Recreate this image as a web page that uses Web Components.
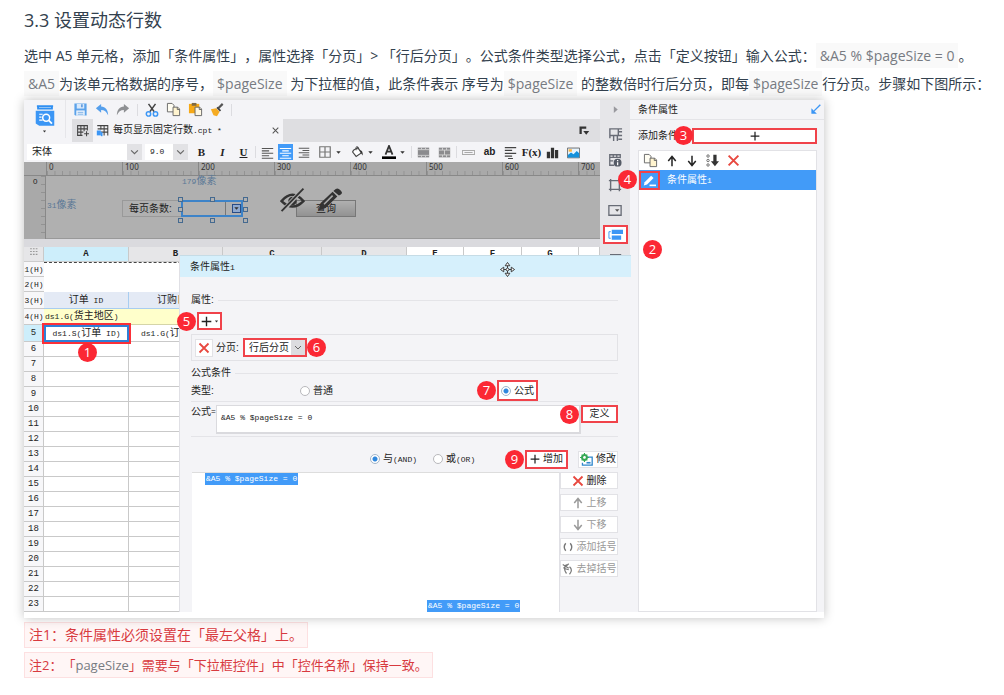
<!DOCTYPE html>
<html lang="zh-CN">
<head>
<meta charset="utf-8">
<title>设置动态行数</title>
<style>
html, body { margin: 0; background: #fff; }
body { font-family: "Open Sans", "Noto Sans CJK SC", sans-serif; color: #33414e; }
</style>
</head>
<body>
<doc-article>
  <h2 slot="title">3.3 设置动态行数</h2>
  <report-designer slot="figure"></report-designer>
  <doc-note>注1：条件属性必须设置在「最左父格」上。</doc-note>
  <doc-note small>注2：「<doc-code plain>pageSize</doc-code>」需要与「下拉框控件」中「控件名称」保持一致。</doc-note>
</doc-article>
<script>
const base = `
*, *::before, *::after { box-sizing: border-box; }
button, input, select, textarea { font: inherit; color: inherit; margin: 0; padding: 0; border: 0; border-radius: 0; background: none; outline: 0; }
button { display: inline-flex; align-items: center; justify-content: center; white-space: nowrap; }
select { appearance: none; }
.m { font-family: "Liberation Mono", "Noto Sans CJK SC", monospace; font-size: 8px; }
.sep { width: 1px; height: 12px; background: #dcdce0; }
`;

function define(name, css, html) {
  const template = document.createElement('template');
  template.innerHTML = `<style>${base}${css}</style>${html}`;
  customElements.define(name, class extends HTMLElement {
    constructor() {
      super();
      this.attachShadow({ mode: 'open' }).append(template.content.cloneNode(true));
    }
  });
}

const icons = {
  logo: '<path d="M1 1h14M2 1v2h12V1" fill="none" stroke="#2f8ff2" stroke-width="1.6"/><path d="M0 5h16v13H3L0 16z" fill="#3b96f5"/><path d="M3 8h3M3 10.500h2M3 13h3" stroke="#fff"/><circle cx="9" cy="11" r="3" fill="#3b96f5" stroke="#fff" stroke-width="1.300"/><path d="M11 13l3 3" stroke="#fff" stroke-width="1.500"/>',
  save: '<path d="M1.500 1.500h13v13h-12l-1-1z" fill="#5ba2ea"/><rect x="4" y="2" width="8" height="5" fill="#d9e9fb"/><path d="M9.500 2.500v3" stroke="#4a8cd8" stroke-width="1.500"/><rect x="3.500" y="9" width="9" height="5.500" fill="#eef5fd"/><path d="M5 11h6M5 13h6" stroke="#79aee5"/>',
  undo: '<path d="M7 1L1 6l6 5V8c4 0 6 2 8 6 0-6-3-9.500-8-10z" fill="#559fec"/>',
  redo: '<path d="M9 1l6 5-6 5V8c-4 0-6 2-8 6 0-6 3-9.500 8-10z" fill="#8e9093"/>',
  cut: '<path d="M4 1l6.500 9M12 1L5.500 10" stroke="#444" stroke-width="1.700"/><circle cx="4" cy="12.500" r="2.500" fill="none" stroke="#3b96f5" stroke-width="1.700"/><circle cx="12" cy="12.500" r="2.500" fill="none" stroke="#3b96f5" stroke-width="1.700"/>',
  copy: '<path d="M1.500 1.500h5l2 2v7h-7z" fill="#fffdf2" stroke="#666"/><path d="M7.500 5.500h5l2 2v7h-7z" fill="#fff4cf" stroke="#666"/><path d="M12 5.500v2.500h2.500" fill="none" stroke="#666"/>',
  paste: '<path d="M1 2h11v10H1z" fill="#f6a916"/><path d="M4 1h5v3H4z" fill="#7f6a42"/><path d="M7.500 5.500h5l2 2v7h-7z" fill="#fff8e2" stroke="#666"/><path d="M12 5.500v2.500h2.500" fill="none" stroke="#666"/>',
  brush: '<path d="M14.500 1l-5 5" stroke="#555" stroke-width="2.500"/><path d="M1 7l6-1 4 4-3 5-4-1z" fill="#f5ab22"/><path d="M8 5l4 4" stroke="#444" stroke-width="2"/>',
  addgrid: '<path d="M14 8V2H2v12h6M2 6h12M2 10h7M6 2v12M10 2v7M10 12h6M13 9v6" fill="none" stroke="#444" stroke-width="1.300"/>',
  sheet: '<path d="M1.500 2h13v12M2 6h12M6 10h8M6 2v5M10 2v12" fill="none" stroke="#444" stroke-width="1.300"/><path d="M1 8h5v6H1z" fill="#3b96f5"/><path d="M7 10v5" stroke="#3b96f5" stroke-width="2"/>',
  close: '<path d="M3 3l10 10M13 3L3 13" stroke="#555" stroke-width="1.800"/>',
  corner: '<path d="M2 2h9v3H5v7H2z" fill="#333"/><path d="M7 8h8l-4 5z" fill="#333"/>',
  down: '<path d="M3 5l5 6 5-6z" fill="#333"/>',
  chevron: '<path d="M2 5l6 6 6-6" fill="none" stroke="#666" stroke-width="2"/>',
  left: '<path d="M1 3h14M1 6h9M1 9h14M1 12h9M1 15h14" stroke="#555" stroke-width="1.300"/>',
  center: '<path d="M1 3h14M4 6h8M1 9h14M4 12h8M1 15h14" stroke="#fff" stroke-width="1.300"/>',
  right: '<path d="M1 3h14M6 6h9M1 9h14M6 12h9M1 15h14" stroke="#555" stroke-width="1.300"/>',
  borders: '<path d="M2 2h12v12H2zM8 2v12M2 8h12" fill="none" stroke="#777" stroke-width="1.400"/>',
  fill: '<path d="M4 6l5-3 4 6-6 4-4-5z" fill="#fff" stroke="#444" stroke-width="1.300"/><path d="M7 6V2.500q1-2 2 0V5" fill="none" stroke="#444"/><path d="M11 6q4 0 3.500 6l-2-3z" fill="#333"/>',
  color: '<path d="M4 11L8 1l4 10M5.500 7.500h5" fill="none" stroke="#333" stroke-width="2"/><path d="M0 13h16v3H0z" fill="#000"/>',
  merge: '<path d="M1 2h14v12H1z" fill="#8b8b8e"/><path d="M1 4.500h14M1 11.500h14M5.500 2v2M10.500 2v2M5.500 12v2M10.500 12v2" stroke="#ddd"/>',
  unmerge: '<path d="M1 2h14v12H1z" fill="#8b8b8e"/><path d="M1 5h14M1 11h14M5.500 2v3M10.500 2v3M5.500 11v3M10.500 11v3M8 5v6" stroke="#ddd"/>',
  strip: '<path d="M.500 5.500h15v5H.500zM3 8h10" fill="none" stroke="#aaa" stroke-width="1.300"/>',
  lines: '<path d="M1 2h14M1 5.500h9M1 9h14M1 12.500h9M5 15.500h6" stroke="#444" stroke-width="1.500"/>',
  bars: '<path d="M1 7h4v8H1zM6 2h4v13H6zM11 5h4v10h-4z" fill="#333"/>',
  image: '<path d="M.500 2.500h15v12H.500z" fill="#e6f4ff" stroke="#555"/><path d="M1 14v-3l4-3 3 2 4-4 3 3v5z" fill="#1591db"/><path d="M2 4h4v3H2z" fill="#ffb33b"/>',
  play: '<path d="M5 2l7 6-7 6z" fill="#99999e"/>',
  cellprop: '<path d="M2 12V2h13M2 9h9V2M6 9v6M10 9v6M11 5h4M11 9h4M11 13h4" fill="none" stroke="#686c76" stroke-width="1.500"/>',
  cellinfo: '<path d="M14 6V2H2v12h5M2 5h12M6 2v3M10 2v3M2 9h4" fill="none" stroke="#686c76" stroke-width="1.500"/><circle cx="11" cy="11" r="4.500" fill="#555b66"/><path d="M11 8v1.500M11 10.500V14" stroke="#fff" stroke-width="1.500"/>',
  frame: '<path d="M3 1v14M13 1v14M1 3h14M1 13h14" stroke="#686c76" stroke-width="1.600"/>',
  combo: '<path d="M1 3h14v11H1z" fill="none" stroke="#686c76" stroke-width="1.500"/><path d="M8 7h5l-2.500 3z" fill="#555"/>',
  cond: '<path d="M4 3h12v4.500H4zM4 9h10v4.500H4z" fill="#3b96f5"/><path d="M3 5H1v7h2" fill="none" stroke="#3b96f5"/>',
  pin: '<path d="M15 1L6 10" stroke="#3b96f5" stroke-width="2"/><path d="M2 6l8 8H2z" fill="#3b96f5"/>',
  plus: '<path d="M8 1v14M1 8h14" stroke="#222" stroke-width="2"/>',
  up: '<path d="M8 15V3M3 8l5-6 5 6" fill="none" stroke="currentColor" stroke-width="2"/>',
  dn: '<path d="M8 1v12M3 8l5 6 5-6" fill="none" stroke="currentColor" stroke-width="2"/>',
  sort: '<path d="M9 1h4v8h3l-5 6-5-6h3z" fill="#333"/><circle cx="2.500" cy="2.500" r="1.500" fill="none" stroke="#555"/><circle cx="2.500" cy="8" r="1.500" fill="none" stroke="#555"/><circle cx="2.500" cy="13.500" r="1.500" fill="none" stroke="#555"/>',
  x: '<path d="M2 2l12 12M14 2L2 14" stroke="#e8483f" stroke-width="2.400"/>',
  edit: '<path d="M1 14l1-4 8-8 3 3-8 8z" fill="#fff"/><path d="M8 14h8" stroke="#fff" stroke-width="2"/>',
  eye: '<path d="M1 9q7-8 14 0-7 7-14 0z" fill="none" stroke="#333" stroke-width="1.600"/><circle cx="8" cy="9" r="2.700" fill="#333"/><path d="M15 1L1 16" stroke="#b0b0b0" stroke-width="2.600"/><path d="M15 1L1 15.500" stroke="#333" stroke-width="1.200"/>',
  pencil: '<path d="M1 15l1.500-5L10 3l3 3-7.500 7.500zM11 2q2-2 4 0t0 3l-1 .500L10.500 2.500z" fill="#333"/><path d="M4.500 11L10 5.500" stroke="#aaa"/>',
  gear: '<path d="M8 5h7v10H3v-3" fill="none" stroke="#2e86cc" stroke-width="1.600"/><path d="M8 12h5" stroke="#2e86cc" stroke-width="2"/><circle cx="5.500" cy="5.500" r="3" fill="#fff" stroke="#35a854" stroke-width="2.600"/><path d="M5.500 0v2M5.500 9v2M0 5.500h2M9 5.500h2M2 2l1.500 1.500M9 2L7.500 3.500M2 9l1.500-1.500M9 9L7.500 7.500" stroke="#35a854" stroke-width="1.400"/>',
  paren: '<path d="M5 3q-4 5 0 10M11 3q4 5 0 10" fill="none" stroke="#777" stroke-width="1.800"/>',
  unparen: '<path d="M6 2q-5 6 0 12M10 5q5 4 0 10M1 2l8 5M9 1L2 7M2 7l7 2" fill="none" stroke="#777" stroke-width="1.600"/>',
  dots: '<path d="M2 3h3M7 3h3M12 3h3M2 8h3M7 8h3M12 8h3M2 13h3M7 13h3M12 13h3" stroke="#999" stroke-width="2"/>',
  move: '<path d="M8 1v14M1 8h14" stroke="#333" stroke-width="1"/><path d="M8 .500L5.500 4h5zM8 15.500L5.500 12h5zM.500 8L4 5.500v5zM15.500 8L12 5.500v5z" fill="#fff" stroke="#333"/><circle cx="8" cy="8" r="1.500" fill="#fff" stroke="#333"/>'
};

customElements.define('ui-icon', class extends HTMLElement {
  constructor() {
    super();
    this.attachShadow({ mode: 'open' });
  }
  connectedCallback() {
    const name = this.getAttribute('name');
    const size = this.getAttribute('size') || 13;
    const box = name === 'logo' ? '0 0 16 19' : '0 0 16 16';
    this.shadowRoot.innerHTML = `<style>:host{display:inline-flex;flex:none;width:${size}px;height:${size}px}svg{width:100%;height:100%}</style><svg viewBox="${box}" aria-hidden="true">${icons[name]}</svg>`;
  }
});

define('step-badge', `
:host { position: absolute; z-index: 5; display: flex; align-items: center; justify-content: center; width: 19px; height: 19px; border-radius: 50%; background: #fb2834; color: #fff; font: 13px/19px "Open Sans", sans-serif; }
`, '<slot></slot>');

define('doc-code', `
:host { padding: 3px 4px; background: #f9f9f9; color: #777b82; font-size: 14px; }
:host([plain]) { padding: 0; background: none; font-size: inherit; }
`, '<slot></slot>');

define('doc-note', `
:host { display: block; width: fit-content; max-width: 100%; margin-bottom: 4px; padding: 0 4px; border: 1px solid #fde0e1; background: #fff6f6; color: #d83a3f; font-size: 14px; line-height: 24px; text-spacing-trim: space-all; }
:host([small]) { font-size: 13px; }
`, '<slot></slot>');

define('doc-article', `
:host { display: block; padding: 8px 8px 0 24px; text-spacing-trim: space-all; }
::slotted(h2) { margin: 0; font-size: 18px; line-height: 24px; font-weight: 400; }
p { margin: 10px 0 2px; font-size: 14px; line-height: 28px; }
`, `
<slot name="title"></slot>
<p>选中 A5 单元格，添加「条件属性」，属性选择「分页」&gt; 「行后分页」。公式条件类型选择公式，点击「定义按钮」输入公式：<doc-code>&amp;A5 % $pageSize = 0</doc-code>。<br><doc-code>&amp;A5</doc-code>为该单元格数据的序号，<doc-code>$pageSize</doc-code> 为下拉框的值，此条件表示 序号为<doc-code>$pageSize</doc-code> 的整数倍时行后分页，即每<doc-code>$pageSize</doc-code>行分页。步骤如下图所示：</p>
<slot name="figure"></slot>
<slot></slot>`);

define('report-designer', `
:host { position: relative; display: grid; grid-template-columns: 1fr 30px 194px; max-width: 800px; margin-bottom: 4px; padding-bottom: 6px; background: #fff; box-shadow: 0 0 10px rgba(0,0,0,.25); color: #222; font: 10px/14px "Liberation Sans", "Noto Sans CJK SC", sans-serif; }
main { display: flex; flex-direction: column; min-width: 0; }
condition-dialog { position: absolute; left: 155px; right: 193px; top: 155px; bottom: 6px; z-index: 2; }
`, `
<main>
  <designer-toolbar></designer-toolbar>
  <param-canvas></param-canvas>
  <sheet-grid></sheet-grid>
</main>
<side-rail></side-rail>
<condition-panel></condition-panel>
<condition-dialog></condition-dialog>`);

define('designer-toolbar', `
:host { display: block; background: #f4f4f7; }
.head { display: grid; grid-template-columns: 42px 1fr; }
.brand { display: flex; flex-direction: column; align-items: center; gap: 2px; padding-top: 5px; border-right: 1px solid #e6e6ea; height: 38px; }
.quick { display: flex; align-items: center; gap: 7px; height: 19px; padding-left: 7px; }
.tabs { display: flex; align-items: center; height: 23px; margin-left: 6px; background: #dedee1; }
.tabs > button { width: 21px; }
.tab { display: flex; align-items: center; gap: 4px; width: 190px; height: 23px; padding: 0 3px; background: #f4f4f7; }
.tab button { margin-left: auto; }
.corner { margin: 0 10px 0 auto; }
.format { display: flex; align-items: center; height: 20px; padding-left: 3px; }
label { position: relative; display: flex; height: 16px; background: #fff; margin-right: 3px; }
label select { width: 100%; padding-left: 5px; }
label ui-icon { position: absolute; right: 0; top: 0; padding: 3px; width: 15px; height: 16px; background: #e2e2e5; pointer-events: none; }
.font { width: 115px; } .size { width: 43px; }
.format > button { width: 21px; height: 16px; font-family: "Liberation Serif", serif; font-size: 11px; font-weight: 700; }
.format > .wide { width: 32px; gap: 3px; }
.format > .on { width: 15px; background: #429bf8; }
.format .sans { font-family: "Liberation Sans", sans-serif; font-size: 10px; }
.format .sep { margin: 0 1px; }
`, `
<div class="head">
  <div class="brand"><ui-icon name="logo" size="22"></ui-icon><ui-icon name="down" size="5"></ui-icon></div>
  <div>
    <div class="quick">
      <button aria-label="保存"><ui-icon name="save" size="15"></ui-icon></button><button aria-label="撤销"><ui-icon name="undo" size="14"></ui-icon></button><button aria-label="重做"><ui-icon name="redo" size="14"></ui-icon></button><span class="sep"></span><button aria-label="剪切"><ui-icon name="cut" size="14"></ui-icon></button><button aria-label="复制"><ui-icon name="copy" size="15"></ui-icon></button><button aria-label="粘贴"><ui-icon name="paste" size="15"></ui-icon></button><button aria-label="格式刷"><ui-icon name="brush" size="14"></ui-icon></button><span class="sep"></span>
    </div>
    <div class="tabs">
      <button aria-label="新建"><ui-icon name="addgrid"></ui-icon></button>
      <div class="tab"><ui-icon name="sheet"></ui-icon><span>每页显示固定行数<span class="m">.cpt *</span></span><button aria-label="关闭"><ui-icon name="close" size="9"></ui-icon></button></div>
      <ui-icon class="corner" name="corner" size="12"></ui-icon>
    </div>
  </div>
</div>
<div class="format">
  <label class="font"><select aria-label="字体"><option>宋体</option></select><ui-icon name="chevron" size="15"></ui-icon></label>
  <label class="size"><select class="m" aria-label="字号"><option>9.0</option></select><ui-icon name="chevron" size="15"></ui-icon></label>
  <button>B</button><button><i>I</i></button><button><u>U</u></button><span class="sep"></span>
  <button aria-label="左对齐"><ui-icon name="left"></ui-icon></button><button class="on" aria-label="居中"><ui-icon name="center"></ui-icon></button><button aria-label="右对齐"><ui-icon name="right" size="12"></ui-icon></button>
  <button class="wide" aria-label="边框"><ui-icon name="borders" size="14"></ui-icon><ui-icon name="down" size="7"></ui-icon></button><button class="wide" aria-label="填充"><ui-icon name="fill" size="14"></ui-icon><ui-icon name="down" size="7"></ui-icon></button><button class="wide" aria-label="字色"><ui-icon name="color" size="14"></ui-icon><ui-icon name="down" size="7"></ui-icon></button><span class="sep"></span>
  <button aria-label="合并"><ui-icon name="merge"></ui-icon></button><button aria-label="拆分"><ui-icon name="unmerge"></ui-icon></button><span class="sep"></span>
  <button aria-label="单元格"><ui-icon name="strip"></ui-icon></button><button class="sans">ab</button><button aria-label="文本"><ui-icon name="lines"></ui-icon></button><button>F(x)</button><button aria-label="图表"><ui-icon name="bars"></ui-icon></button><button aria-label="图片"><ui-icon name="image"></ui-icon></button>
</div>`);

define('param-canvas', `
:host { display: block; border-bottom: 8px solid #dadade; }
.ruler { display: flex; height: 14px; padding-left: 22px; overflow: hidden; background: #a9a9a9; border-bottom: 1px solid #888; }
.ruler span { flex: none; width: 76px; padding-left: 2px; border-left: 1px solid #888; font: 8px/10px "Noto Sans", sans-serif; color: #333; background: linear-gradient(90deg, #929292 1px, transparent 1px) 0 100% / 10% 4px repeat-x; }
.row { display: grid; grid-template-columns: 22px 1fr; height: 63px; }
.vert { border-right: 1px solid #888; padding: 2px 8px 0 9px; background: linear-gradient(#929292 1px, transparent 1px) 100% 0 / 4px 8px repeat-y #a9a9a9; font-size: 8px; line-height: 8px; }
.free { position: relative; background: #b0b0b0; border-bottom: 1px solid #999; }
.free > * { position: absolute; }
.hint { color: #5b7896; }
.caption { left: 76px; top: 24px; width: 60px; height: 17px; border: 1px solid #999; padding-left: 6px; line-height: 15px; }
.field { left: 135px; top: 24px; width: 62px; height: 17px; border: 2px solid #3d83c8; }
.field select { width: 100%; height: 13px; display: block; }
.field ui-icon { position: absolute; right: 0; top: 2px; background: #8fa9cf; border: 1px solid #284c86; }
.field::after { content: ""; position: absolute; right: 15px; top: 0; bottom: 0; width: 1px; background: #777; }
.h { width: 5px; height: 5px; border: 1px solid #456a90; background: #b0b0b0; }
.go { left: 250px; top: 24px; width: 60px; height: 17px; border: 1px solid #777; background: linear-gradient(#b0b0b0, #929292); }
`, `
<div class="ruler"><span>0</span><span>100</span><span>200</span><span>300</span><span>400</span><span>500</span><span>600</span><span>700</span></div>
<div class="row">
  <div class="vert">0</div>
  <div class="free">
    <span class="hint" style="left:136px;top:-2px"><span class="m">179</span>像素</span>
    <span class="hint" style="left:1px;top:22px"><span class="m">31</span>像素</span>
    <label class="caption" for="rows">每页条数:</label>
    <div class="field"><select id="rows"></select><ui-icon name="down" size="9"></ui-icon></div>
    <i class="h" style="left:132px;top:21px"></i><i class="h" style="left:164px;top:21px"></i><i class="h" style="left:197px;top:21px"></i>
    <i class="h" style="left:132px;top:31px"></i><i class="h" style="left:197px;top:31px"></i>
    <i class="h" style="left:132px;top:42px"></i><i class="h" style="left:164px;top:42px"></i><i class="h" style="left:197px;top:42px"></i>
    <button class="go">查询</button>
    <ui-icon name="eye" size="25" style="left:234px;top:11px"></ui-icon>
    <ui-icon name="pencil" size="25" style="left:271px;top:11px"></ui-icon>
  </div>
</div>`);

const blankRows = Array.from({ length: 18 }, (_, i) => `<tr><th scope="row">${i + 6}</th><td></td><td></td><td></td><td></td><td></td><td></td><td></td><td></td></tr>`).join('');
define('sheet-grid', `
:host { display: block; height: 365px; overflow: hidden; position: relative; }
table { width: 100%; table-layout: fixed; border-collapse: separate; border-spacing: 0; }
th, td { height: 15px; padding: 0; overflow: hidden; border-right: 1px solid #c9c9c9; border-bottom: 1px solid #c9c9c9; text-align: center; font-weight: 400; line-height: 14px; white-space: nowrap; }
th { font: 9px/13px "Liberation Mono", monospace; background: #f7f7f9; }
.top th, .head th, .group th { font-size: 8px; overflow: visible; border-right: 0; }
thead th { background: #e6e6e8; font: bold 9px/14px "Liberation Mono", monospace; border-bottom-color: #ccc; }
thead .a { background: #cdeefb; }
thead .w { background: #fff; }
.top td { border-color: #fff; }
.first td { border-top: 1px dashed #444; }
.head td { height: 17px; background: #e4eaf5; border-color: #a8cdf0; }
.head .b { text-align: left; padding-left: 28px; }
.head th, .group th, .five th { height: 16px; }
.group td { background: #ffffcb; text-align: left; padding-left: 1px; border-color: #d5d5a8; }
.five th { background: #cdeefb; }
.five td { height: 16px; line-height: 12px; }
.five td.cur { border: 2px solid #2f7fd6; outline: 2px solid #fb3038; outline-offset: 0; overflow: visible; position: relative; }
.five td.b { text-align: left; padding-left: 12px; }
step-badge { left: 54px; top: 96px; }
`, `
<table>
  <colgroup><col style="width:20px"><col style="width:85px"><col style="width:94px"><col style="width:99px"><col style="width:85px"><col style="width:57px"><col style="width:58px"><col style="width:57px"><col></colgroup>
  <thead><tr><th><ui-icon name="dots" size="9"></ui-icon></th><th class="a">A</th><th>B</th><th>C</th><th>D</th><th class="w">E</th><th class="w">F</th><th class="w">G</th><th class="w"></th></tr></thead>
  <tbody>
    <tr class="top first"><th scope="row">1(H)</th><td colspan="8"></td></tr>
    <tr class="top"><th scope="row">2(H)</th><td colspan="8"></td></tr>
    <tr class="head"><th scope="row">3(H)</th><td>订单<span class="m"> ID</span></td><td class="b">订购日</td><td colspan="6"></td></tr>
    <tr class="group"><th scope="row">4(H)</th><td colspan="8"><span class="m">ds1.G(</span>货主地区<span class="m">)</span></td></tr>
    <tr class="five"><th scope="row">5</th><td class="cur"><span class="m">ds1.S(</span>订单<span class="m"> ID)</span></td><td class="b"><span class="m">ds1.G(</span>订购</td><td></td><td></td><td></td><td></td><td></td><td></td></tr>
    ${blankRows}
  </tbody>
</table>
<step-badge>1</step-badge>`);

define('side-rail', `
:host { display: flex; flex-direction: column; align-items: center; background: #e6e6e9; }
button { width: 25px; height: 19px; margin-bottom: 6px; }
.on { border: 2px solid #f0424a; background: #fff; }
`, `
<button aria-label="展开"><ui-icon name="play" size="9"></ui-icon></button>
<button aria-label="单元格元素"><ui-icon name="cellprop" size="15"></ui-icon></button>
<button aria-label="单元格属性"><ui-icon name="cellinfo" size="14"></ui-icon></button>
<button aria-label="悬浮元素"><ui-icon name="frame" size="14"></ui-icon></button>
<button aria-label="控件设置"><ui-icon name="combo" size="14"></ui-icon></button>
<button class="on" aria-label="条件属性"><ui-icon name="cond" size="15"></ui-icon></button>
<button aria-label="超级链接"><ui-icon name="cellprop"></ui-icon></button>`);

define('condition-panel', `
:host { display: flex; flex-direction: column; padding: 0 7px 0 8px; background: #f4f4f7; }
header { display: flex; align-items: center; justify-content: space-between; height: 20px; margin: 0 -7px 8px -8px; padding: 0 3px 0 8px; border-bottom: 1px solid #e4e4e8; }
.add { position: relative; display: flex; align-items: center; height: 16px; margin-bottom: 6px; }
.add button { position: absolute; left: 54px; right: 0; height: 16px; background: #fff; border: 2px solid #f0424a; }
.add step-badge { left: 36px; top: -2px; }
.list { position: relative; flex: 1; background: #fff; border: 1px solid #e2e2e6; }
.tools { display: flex; align-items: center; gap: 8px; height: 19px; padding-left: 4px; }
.item { position: relative; display: flex; align-items: center; height: 20px; background: #429bf8; color: #fff; gap: 7px; }
.item button { width: 21px; height: 19px; border: 2px solid #f0424a; }
.item step-badge { left: -21px; top: 0; }
.two { left: 4px; top: 89px; }
`, `
<header>条件属性<ui-icon name="pin" size="11"></ui-icon></header>
<div class="add">添加条件<button aria-label="添加条件"><ui-icon name="plus" size="10"></ui-icon></button><step-badge>3</step-badge></div>
<div class="list">
  <div class="tools"><button aria-label="复制"><ui-icon name="copy" size="15"></ui-icon></button><button aria-label="上移"><ui-icon name="up" size="12"></ui-icon></button><button aria-label="下移"><ui-icon name="dn" size="12"></ui-icon></button><button aria-label="排序"><ui-icon name="sort"></ui-icon></button><button aria-label="删除"><ui-icon name="x"></ui-icon></button></div>
  <div class="item"><button aria-label="编辑"><ui-icon name="edit" size="13"></ui-icon></button><span>条件属性<span class="m">1</span></span><step-badge>4</step-badge></div>
  <step-badge class="two">2</step-badge>
</div>`);

define('condition-dialog', `
:host { display: flex; flex-direction: column; background: #f4f4f7; border-left: 1px solid #e0e0e5; overflow: visible; }
header { position: relative; height: 22px; padding-left: 10px; line-height: 22px; background: #d6f0fc; border-top: 1px solid #c6dce6; }
header ui-icon { position: absolute; left: 320px; top: 6px; }
.body { flex: 1; display: flex; flex-direction: column; padding: 16px 13px 0 11px; min-height: 0; }
.legend { display: flex; align-items: center; gap: 4px; height: 14px; }
.legend::after { content: ""; flex: 1; height: 1px; background: #e4e4e8; }
.red { position: relative; border: 2px solid #f0424a; background: #fff; }
.plus { width: 25px; height: 18px; margin: 5px 0 4px 6px; gap: 2px; }
.plus step-badge { left: -22px; top: -2px; }
.prop { display: flex; align-items: center; height: 27px; padding-left: 3px; margin-bottom: 5px; border: 1px solid #e2e2e6; }
.prop > button { width: 18px; height: 18px; background: #fff; border: 1px solid #e2e2e6; margin-right: 3px; }
.prop .lab { width: 27px; }
.sel { width: 64px; height: 19px; }
.sel select { width: 100%; height: 15px; padding-left: 4px; display: block; }
.sel > ui-icon { position: absolute; right: 0; top: 0; width: 14px; height: 15px; padding: 3px; background: #dcdce0; pointer-events: none; }
.sel step-badge { right: -21px; top: -2px; }
.type { position: relative; display: grid; grid-template-columns: 109px 1fr auto; align-items: center; height: 22px; padding-right: 80px; border-bottom: 1px solid #e4e4e8; }
label { display: flex; align-items: center; gap: 3px; white-space: nowrap; }
input[type=radio] { appearance: none; width: 10px; height: 10px; border: 1px solid #b8b8bc; border-radius: 50%; background: #fff; }
input:checked { background: radial-gradient(circle, #2f87dd 0 2px, #fff 3px); border-color: #a3b6ca; }
.type .red { width: 41px; height: 21px; padding-left: 2px; }
.type step-badge { left: -22px; top: -1px; }
.formula { display: grid; grid-template-columns: 25px 1fr 37px; height: 35px; padding-top: 3px; border-bottom: 1px solid #e4e4e8; }
.formula label { gap: 0; height: 14px; }
textarea { resize: none; height: 29px; padding: 7px 4px; background: #fff; border: 1px solid #dadade; border-width: 1px 2px 2px 1px; line-height: 9px; }
.formula button { height: 18px; }
.formula step-badge { left: -23px; top: -2px; }
.ops { display: flex; align-items: center; height: 35px; padding: 9px 0 0 179px; gap: 16px; }
.addb { width: 43px; height: 19px; gap: 3px; margin-left: auto; }
.addb step-badge { left: -22px; top: -2px; }
.mod { width: 40px; height: 17px; gap: 3px; margin-left: -6px; background: #fff; border: 1px solid #e2e2e6; }
.lower { flex: 1; display: grid; grid-template-columns: 1fr 59px; min-height: 0; margin-left: 1px; }
.exprs { position: relative; background: #fff; border-top: 1px solid #ddd; display: flex; flex-direction: column; justify-content: space-between; align-items: start; padding-left: 13px; }
.exprs span { padding: 0 1px; background: #429bf8; color: #fff; line-height: 12px; }
.exprs span + span { margin-left: 222px; }
.acts { display: flex; flex-direction: column; gap: 5px; border-left: 1px solid #e0e0e5; }
.acts button { height: 17px; gap: 3px; background: #fff; border: 1px solid #e2e2e6; color: #999; }
.acts button:first-child { color: #222; }
`, `
<header>条件属性<span class="m">1</span><ui-icon name="move" size="15"></ui-icon></header>
<div class="body">
  <div class="legend">属性:</div>
  <button class="red plus" aria-label="添加属性"><ui-icon name="plus" size="11"></ui-icon><ui-icon name="down" size="5"></ui-icon><step-badge>5</step-badge></button>
  <div class="prop"><button aria-label="移除"><ui-icon name="x" size="12"></ui-icon></button><label class="lab" for="paging">分页:</label><div class="red sel"><select id="paging"><option>行后分页</option></select><ui-icon name="chevron" size="14"></ui-icon><step-badge>6</step-badge></div></div>
  <div class="legend">公式条件</div>
  <div class="type"><span>类型:</span><label><input type="radio" name="type">普通</label><label class="red"><input type="radio" name="type" checked>公式<step-badge>7</step-badge></label></div>
  <div class="formula"><label for="fx">公式<span class="m">=</span></label><textarea id="fx" class="m" spellcheck="false">&amp;A5 % $pageSize = 0</textarea><button class="red">定义<step-badge>8</step-badge></button></div>
  <div class="ops"><label><input type="radio" name="op" checked><span>与<span class="m">(AND)</span></span></label><label><input type="radio" name="op"><span>或<span class="m">(OR)</span></span></label><button class="red addb"><ui-icon name="plus" size="10"></ui-icon>增加<step-badge>9</step-badge></button><button class="mod"><ui-icon name="gear" size="13"></ui-icon>修改</button></div>
  <div class="lower">
    <div class="exprs"><span class="m">&amp;A5 % $pageSize = 0</span><span class="m">&amp;A5 % $pageSize = 0</span></div>
    <div class="acts"><button><ui-icon name="x" size="12"></ui-icon>删除</button><button><ui-icon name="up" size="12"></ui-icon>上移</button><button><ui-icon name="dn" size="12"></ui-icon>下移</button><button><ui-icon name="paren" size="12"></ui-icon>添加括号</button><button><ui-icon name="unparen" size="12"></ui-icon>去掉括号</button></div>
  </div>
</div>`);
</script>
</body>
</html>
